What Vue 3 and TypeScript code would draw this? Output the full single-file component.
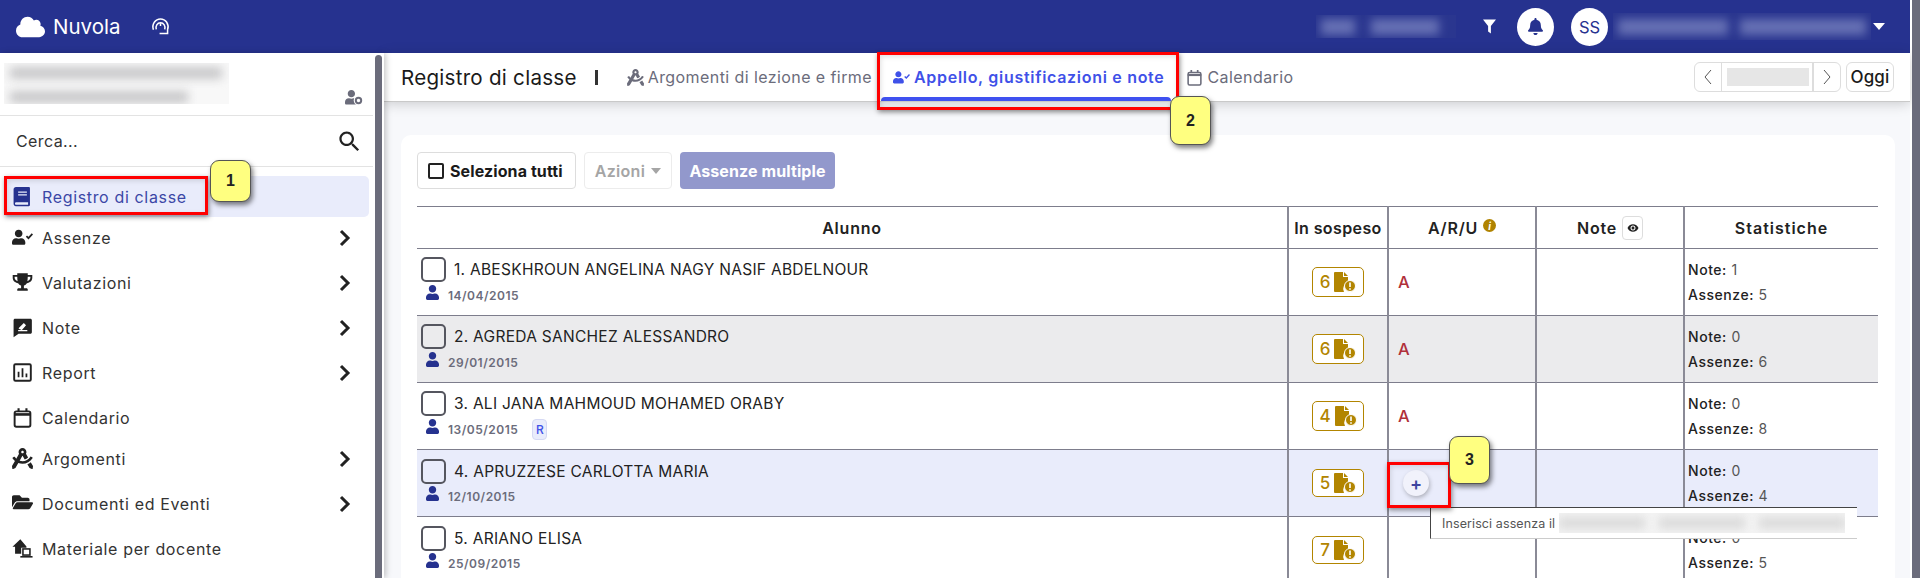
<script setup lang="ts">
type MenuItem = {
  label: string;
  icon: string;
  sub?: boolean;
  active?: boolean;
};

type Student = {
  num: number;
  name: string;
  birth: string;
  pending: number;
  absence: boolean;
  notes: number;
  absences: number;
  tag?: string;
};

const USER = "M224 256c70.7 0 128-57.3 128-128S294.7 0 224 0 96 57.3 96 128s57.3 128 128 128zm89.6 32h-16.7c-22.2 10.2-46.9 16-72.9 16s-50.6-5.8-72.9-16h-16.7C60.2 288 0 348.2 0 422.4V464c0 26.5 21.5 48 48 48h352c26.5 0 48-21.5 48-48v-41.6c0-74.2-60.2-134.4-134.4-134.4z";

// small icon set, viewBox is always 0 0 24 24 so the menu can share one svg tag
const icons: Record<string, string> = {
  book: `<path fill="currentColor" d="M4.5 1h14.7c.7 0 1.3.6 1.3 1.3v19.4c0 .7-.6 1.3-1.3 1.3H4.5C3 23 1.8 21.8 1.8 20.2V3.8C1.8 2.2 3 1 4.5 1zM7 6.2v1.4h10V6.2zm0 3.2v1.4h10V9.4zM4.8 18.6c-.9 0-1.4.7-1.4 1.5s.5 1.4 1.4 1.4h13.6v-2.9z"/>`,
  absence: `<g transform="translate(0 3) scale(.034)" fill="currentColor"><path d="${USER}"/></g><path d="M16.5 10.5l2.3 2.3 4.5-5" fill="none" stroke="currentColor" stroke-width="2"/>`,
  trophy: `<path fill="currentColor" d="M6 1.5h12v1.8h5.2v3.4c0 3.3-2.7 5.8-6.2 6.1-.8 1.3-2 2.2-3.4 2.6v3.1h2.8c1 0 1.6.7 1.6 1.6v1.4H6v-1.4c0-.9.6-1.6 1.6-1.6h2.8v-3.1c-1.4-.4-2.6-1.3-3.4-2.6C3.5 12.5.8 10 .8 6.7V3.3H6zM3 5.3v1.4c0 1.8 1.4 3.3 3.4 3.8-.2-1.4-.4-3.3-.4-5.2zm18 0h-3c0 1.9-.2 3.8-.4 5.2 2-.5 3.4-2 3.4-3.8z"/>`,
  note: `<path fill="currentColor" d="M3.5 2H21c1 0 1.7.7 1.7 1.7v13.6c0 1-.7 1.7-1.7 1.7H7.5l-5.7 4V3.7c0-1 .7-1.7 1.7-1.7z"/><path d="M7 15.5h10.5M8 13.5L13.5 8 15 9.5l-4.5 5" fill="#fff" stroke="#fff" stroke-width="1.5"/>`,
  report: `<rect x="2.5" y="2.5" width="19" height="19" rx="1.5" fill="none" stroke="currentColor" stroke-width="2.2"/><path d="M7.5 11v6.5M12 7v10.5M16.5 13v4.5" stroke="currentColor" stroke-width="2"/>`,
  calendar: `<rect x="3" y="5" width="18" height="17.5" rx="2" fill="none" stroke="currentColor" stroke-width="2.2"/><path d="M2.5 8.5h19" stroke="currentColor" stroke-width="3"/><path d="M7.5 1.5v4M16.5 1.5v4" stroke="currentColor" stroke-width="2.4"/>`,
  compass: `<g transform="scale(.0469)" fill="currentColor"><path d="M457.01 344.42c-25.05 20.33-52.63 37.18-82.54 49.05l54.38 94.19 53.95 23.04c9.81 4.19 20.89-2.21 22.17-12.8l7.02-58.25-54.98-95.23zm42.49-94.56c4.86-7.67 1.89-17.99-6.05-22.39l-28.07-15.57c-7.48-4.15-16.61-1.46-21.26 5.72C403.01 281.15 332.25 320 256 320c-23.93 0-47.23-4.25-69.41-11.53l67.36-116.68c.7.02 1.34.21 2.04.21s1.35-.19 2.04-.21l51.09 88.5c31.23-8.96 59.56-25.75 82.61-48.92l-51.79-89.71C347.39 128.03 352 112.63 352 96c0-53.02-42.98-96-96-96s-96 42.98-96 96c0 16.63 4.61 32.03 12.05 45.66l-68.3 118.31c-12.55-11.61-23.96-24.59-33.68-39-4.79-7.1-13.97-9.62-21.38-5.33l-27.75 16.07c-7.85 4.54-10.63 14.9-5.64 22.47 15.57 23.64 34.69 44.21 55.98 62.02L0 439.66l7.02 58.25c1.28 10.59 12.36 16.99 22.17 12.8l53.95-23.04 70.8-122.63C186.13 377.28 220.62 384 256 384c99.05 0 190.88-51.01 243.5-134.14zM256 64c17.67 0 32 14.33 32 32s-14.33 32-32 32-32-14.33-32-32 14.33-32 32-32z"/></g>`,
  folder: `<g transform="scale(.0417)" fill="currentColor"><path d="M572.694 292.093L500.27 416.248A63.997 63.997 0 0 1 444.989 448H45.025c-18.523 0-30.064-20.093-20.731-36.093l72.424-124.155A64 64 0 0 1 152 256h399.964c18.523 0 30.064 20.093 20.73 36.093zM152 224h328v-48c0-26.51-21.49-48-48-48H272l-64-64H48C21.49 64 0 85.49 0 112v278.046l69.077-118.418C86.214 242.25 117.989 224 152 224z"/></g>`,
  house: `<path fill="currentColor" d="M9.5 1.5L.5 10h3v8h7v-7h6V9.8L9.5 1.5z"/><rect x="12.5" y="12.5" width="8" height="7" fill="#fff" stroke="currentColor" stroke-width="1.8"/><path d="M9.5 21.5h14" stroke="currentColor" stroke-width="1.8"/>`,
};

const menu: MenuItem[] = [
  { label: "Registro di classe", icon: "book", active: true },
  { label: "Assenze", icon: "absence", sub: true },
  { label: "Valutazioni", icon: "trophy", sub: true },
  { label: "Note", icon: "note", sub: true },
  { label: "Report", icon: "report", sub: true },
  { label: "Calendario", icon: "calendar" },
  { label: "Argomenti", icon: "compass", sub: true },
  { label: "Documenti ed Eventi", icon: "folder", sub: true },
  { label: "Materiale per docente", icon: "house" },
];

const students: Student[] = [
  { num: 1, name: "ABESKHROUN ANGELINA NAGY NASIF ABDELNOUR", birth: "14/04/2015", pending: 6, absence: true, notes: 1, absences: 5 },
  { num: 2, name: "AGREDA SANCHEZ ALESSANDRO", birth: "29/01/2015", pending: 6, absence: true, notes: 0, absences: 6 },
  { num: 3, name: "ALI JANA MAHMOUD MOHAMED ORABY", birth: "13/05/2015", pending: 4, absence: true, notes: 0, absences: 8, tag: "R" },
  { num: 4, name: "APRUZZESE CARLOTTA MARIA", birth: "12/10/2015", pending: 5, absence: false, notes: 0, absences: 4 },
  { num: 5, name: "ARIANO ELISA", birth: "25/09/2015", pending: 7, absence: false, notes: 0, absences: 5 },
];
</script>

<template>
  <div class="page">
    <div class="shell">
      <header class="topbar">
        <svg class="cloud" viewBox="0 0 640 512"><path fill="#fff" d="M537.6 226.6c4.1-10.7 6.4-22.4 6.4-34.6 0-53-43-96-96-96-19.7 0-38.1 6-53.3 16.2C367 64.2 315.3 32 256 32c-88.4 0-160 71.6-160 160 0 2.7.1 5.4.2 8.1C40.2 219.8 0 273.2 0 336c0 79.5 64.5 144 144 144h368c70.7 0 128-57.3 128-128 0-61.9-44-113.6-102.4-125.4z" /></svg>
        <span class="brand">Nuvola</span>
        <svg class="gauge" viewBox="0 0 20 18" fill="none" stroke="#fff" stroke-width="1.6">
          <path d="M2.5 12.5C.5 6.5 4.5 1 10 1s9.500 5.500 7.500 11.500V16.500H9" />
          <path d="M5.5 12C4.500 8.500 6.500 5 10 5s5.500 3.500 4.500 7" />
          <path d="M10 5.5v3" />
        </svg>
        <div class="top-right">
          <div class="blurred school"><i class="w1"></i><i class="w2"></i></div>
          <svg class="funnel" viewBox="0 0 14 15"><path fill="#fff" d="M0 0h14L8.500 7v8l-3-2V7z" /></svg>
          <span class="round bell">
            <svg viewBox="0 0 448 512"><path fill="#26328f" d="M224 512c35.32 0 63.97-28.65 63.97-64H160.03c0 35.35 28.65 64 63.97 64zm215.39-149.71c-19.32-20.76-55.47-51.99-55.47-154.29 0-77.7-54.48-139.9-127.94-155.16V32c0-17.67-14.32-32-31.98-32s-31.98 14.33-31.98 32v20.84C118.56 68.1 64.08 130.3 64.08 208c0 102.3-36.15 133.53-55.47 154.29-6 6.45-8.66 14.16-8.61 21.71.11 16.4 12.98 32 32.1 32h383.8c19.12 0 32-15.6 32.1-32 .05-7.55-2.61-15.27-8.61-21.71z" /></svg>
          </span>
          <span class="round initials">SS</span>
          <div class="blurred person"><i class="w3"></i><i class="w4"></i></div>
          <span class="caret"></span>
        </div>
      </header>

      <div class="body">
        <aside class="sidebar">
          <div class="side-scroll">
            <div class="who">
              <div class="blurred who-name"><i class="l1"></i><i class="l2"></i></div>
              <svg class="who-gear" viewBox="0 0 18 15">
                <g transform="scale(.0285)" fill="#6b6c7b"><path :d="USER" /></g>
                <circle cx="13.5" cy="10.5" r="4.8" fill="#fff" />
                <circle cx="13.5" cy="10.5" r="2.7" fill="none" stroke="#6b6c7b" stroke-width="2" />
              </svg>
            </div>
            <div class="search">
              <span>Cerca...</span>
              <svg viewBox="0 0 24 24"><path fill="#222" d="M15.5 14h-.79l-.28-.27C15.41 12.59 16 11.11 16 9.5 16 5.91 13.09 3 9.5 3S3 5.91 3 9.5 5.91 16 9.5 16c1.61 0 3.09-.59 4.23-1.57l.27.28v.79l5 4.99L20.49 19l-4.99-5zm-6 0C7.01 14 5 11.99 5 9.5S7.01 5 9.5 5 14 7.01 14 9.5 11.99 14 9.5 14z" /></svg>
            </div>
            <nav class="menu">
              <a v-for="m in menu" :key="m.label" class="menu-item" :class="{ active: m.active, sub: m.sub }">
                <svg class="menu-icon" viewBox="0 0 24 24" v-html="icons[m.icon]"></svg>
                <span>{{ m.label }}</span>
                <svg v-if="m.sub" class="chev" viewBox="0 0 12 18"><path d="M2 2l7 7-7 7" fill="none" stroke="#222" stroke-width="3" /></svg>
              </a>
            </nav>
          </div>
          <div class="side-thumb"></div>
        </aside>

        <main class="main">
          <div class="subhead">
            <h1>Registro di classe</h1>
            <span class="sep"></span>
            <a class="tab">
              <svg viewBox="0 0 24 24" v-html="icons.compass"></svg>
              Argomenti di lezione e firme
            </a>
            <a class="tab current">
              <svg viewBox="0 0 24 24" v-html="icons.absence"></svg>
              Appello, giustificazioni e note
            </a>
            <a class="tab">
              <svg viewBox="0 0 24 24" v-html="icons.calendar"></svg>
              Calendario
            </a>
            <div class="date-nav">
              <div class="date-box">
                <span class="arrow"><svg viewBox="0 0 10 16"><path d="M8 1L2 8l6 7" fill="none" stroke="#555" /></svg></span>
                <span class="date-value"><i></i></span>
                <span class="arrow"><svg viewBox="0 0 10 16"><path d="M2 1l6 7-6 7" fill="none" stroke="#555" /></svg></span>
              </div>
              <button class="today">Oggi</button>
            </div>
          </div>

          <section class="card">
            <div class="actions">
              <button class="btn select"><span class="box small"></span>Seleziona tutti</button>
              <button class="btn disabled">Azioni <span class="tri"></span></button>
              <button class="btn multi">Assenze multiple</button>
            </div>
            <table class="grid">
              <colgroup>
                <col class="c-name" />
                <col class="c-pending" />
                <col class="c-aru" />
                <col class="c-note" />
                <col class="c-stat" />
              </colgroup>
              <thead>
                <tr>
                  <th>Alunno</th>
                  <th>In sospeso</th>
                  <th>
                    <span class="with-icon">A/R/U <span class="info">i</span></span>
                  </th>
                  <th>
                    <span class="with-icon">Note
                      <span class="eye"><svg viewBox="0 0 24 24"><path fill="#222" d="M12 4.5C7 4.5 2.73 7.61 1 12c1.73 4.39 6 7.5 11 7.5s9.27-3.11 11-7.5c-1.73-4.39-6-7.5-11-7.5zM12 17c-2.76 0-5-2.24-5-5s2.24-5 5-5 5 2.24 5 5-2.24 5-5 5zm0-8c-1.66 0-3 1.34-3 3s1.34 3 3 3 3-1.34 3-3-1.34-3-3-3z" /></svg></span>
                    </span>
                  </th>
                  <th>Statistiche</th>
                </tr>
              </thead>
              <tbody>
                <tr v-for="s in students" :key="s.num" :class="{ odd: s.num === 2, hover: s.num === 4, late: s.num > 3 }">
                  <td class="who-cell">
                    <div class="name-line"><span class="box"></span>{{ s.num }}. {{ s.name }}</div>
                    <div class="birth-line">
                      <svg viewBox="0 0 448 512"><path fill="#26328f" :d="USER" /></svg>
                      <span class="birth">{{ s.birth }}</span>
                      <span v-if="s.tag" class="tag">{{ s.tag }}</span>
                    </div>
                  </td>
                  <td class="center">
                    <span class="pending" :class="{ slim: s.num > 3 }">
                      {{ s.pending }}
                      <svg viewBox="0 0 22 20">
                        <path fill="#b28500" d="M1 0h8v5h5v6a6 6 0 0 0-4 9H1a1 1 0 0 1-1-1V1a1 1 0 0 1 1-1zM10 0l4 4h-4z" />
                        <circle cx="16" cy="14" r="5.5" fill="#b28500" stroke="#fff" />
                        <path d="M16 10.5V15M16 16.2v1.5" stroke="#fff" stroke-width="1.6" />
                      </svg>
                    </span>
                  </td>
                  <td class="aru">
                    <span v-if="s.absence" class="mark">A</span>
                    <span v-else-if="s.num === 4" class="plus">+</span>
                  </td>
                  <td></td>
                  <td class="stats">
                    <div><b>Note:</b> {{ s.notes }}</div>
                    <div><b>Assenze:</b> {{ s.absences }}</div>
                  </td>
                </tr>
              </tbody>
            </table>
          </section>
        </main>
      </div>
    </div>
    <div class="page-scroll"></div>

    <!-- annotations drawn on top of the screenshot -->
    <div class="red r1"></div>
    <div class="red r2"></div>
    <div class="red r3"></div>
    <div class="callout n1">1</div>
    <div class="callout n2">2</div>
    <div class="callout n3">3</div>
    <div class="tooltip">Inserisci assenza il <span class="tip-blur"><i></i><i></i><i></i></span></div>
  </div>
</template>

<style>
html,
body {
  margin: 0;
  overflow: hidden;
}
</style>

<style scoped>
.page {
  position: relative;
  display: flex;
  width: 1920px;
  height: 578px;
  overflow: hidden;
  background: #fff;
  font-family: Inter, "Noto Sans", sans-serif;
  color: #222;
}
.shell {
  display: flex;
  flex-direction: column;
  width: 1910px;
}
.page-scroll {
  width: 8px;
  margin-left: 2px;
  background: #6b6c7b;
}

.topbar {
  display: flex;
  align-items: center;
  flex: 0 0 53px;
  padding-left: 16px;
  background: #26328f;
  color: #fff;
}
.cloud {
  width: 29px;
  height: 24px;
}
.brand {
  margin-left: 8px;
  font-size: 20.5px;
}
.gauge {
  width: 19px;
  height: 17px;
  margin-left: 31px;
}
.top-right {
  display: flex;
  align-items: center;
  margin-left: auto;
  padding-right: 25px;
}
.blurred {
  display: flex;
  overflow: hidden;
}
.blurred i {
  display: block;
  filter: blur(5px);
}
.school {
  width: 140px;
  height: 23px;
  gap: 16px;
  align-items: center;
  background: #2a368f;
}
.school i {
  height: 16px;
  background: #6670b4;
}
.school .w1 {
  width: 34px;
  margin-left: 5px;
}
.school .w2 {
  width: 68px;
}
.funnel {
  width: 13px;
  height: 15px;
  margin-left: 27px;
}
.round {
  display: flex;
  align-items: center;
  justify-content: center;
  width: 37px;
  height: 38px;
  border-radius: 50%;
  background: #fff;
  color: #26328f;
}
.bell {
  margin-left: 21px;
}
.bell svg {
  width: 15px;
  height: 17px;
}
.initials {
  margin-left: 17px;
  font-size: 16.5px;
}
.person {
  width: 258px;
  height: 27px;
  margin-left: 5px;
  gap: 12px;
  align-items: center;
  background: #2a368f;
}
.person i {
  height: 16px;
  background: #6670b4;
}
.person .w3 {
  width: 110px;
  margin-left: 5px;
}
.person .w4 {
  width: 126px;
}
.caret {
  width: 0;
  height: 0;
  margin-left: 2px;
  border-left: 6px solid transparent;
  border-right: 6px solid transparent;
  border-top: 7px solid #fff;
}

.body {
  display: flex;
  flex: 1;
  min-height: 0;
}
.sidebar {
  position: relative;
  z-index: 2;
  display: flex;
  flex: 0 0 384px;
  background: #fff;
  box-shadow: 2px 0 6px rgba(0, 0, 0, 0.22);
}
.side-scroll {
  width: 373px;
}
.side-thumb {
  width: 7px;
  margin: 2px 0 0 2px;
  border-radius: 4px 4px 0 0;
  background: #6b6c7b;
}
.who {
  position: relative;
  height: 63px;
  border-bottom: 1px solid #e3e3e3;
  box-sizing: border-box;
  padding: 10px 0 0 4px;
}
.who-name {
  flex-direction: column;
  gap: 12px;
  width: 225px;
  height: 41px;
  padding: 4px 0 0 6px;
  box-sizing: border-box;
  background: #f8f8f8;
}
.who-name i {
  flex: none;
  height: 12px;
  background: #c8c8ca;
}
.who-name .l1 {
  width: 212px;
}
.who-name .l2 {
  width: 178px;
}
.who-gear {
  position: absolute;
  right: 10px;
  top: 37px;
  width: 18px;
  height: 15px;
}
.search {
  display: flex;
  align-items: center;
  justify-content: space-between;
  height: 50px;
  padding: 0 10px 0 16px;
  border-bottom: 1px solid #e3e3e3;
  font-size: 16px;
  letter-spacing: 0.4px;
  color: #333;
}
.search svg {
  width: 27px;
  height: 27px;
}
.menu {
  padding: 9px 4px 0;
}
.menu-item {
  display: flex;
  align-items: center;
  box-sizing: border-box;
  height: 41px;
  padding: 0 18px 0 8px;
  border-radius: 5px;
  font-size: 16px;
  letter-spacing: 0.65px;
  color: #333;
}
.menu-item.sub {
  height: 45px;
  padding-bottom: 4px;
}
.menu-item.active {
  background: #e9ecfb;
  color: #3b47a6;
}
.menu-icon {
  width: 21px;
  height: 21px;
  margin-right: 9px;
  color: #222;
}
.active .menu-icon {
  color: #26328f;
}
.chev {
  width: 12px;
  height: 18px;
  margin-left: auto;
}

.main {
  display: flex;
  flex-direction: column;
  flex: 1;
  min-width: 0;
  background: #f7f8fb;
}
.subhead {
  display: flex;
  align-items: center;
  flex: 0 0 49px;
  box-sizing: border-box;
  height: 49px;
  padding: 0 16px 0 17px;
  background: #fff;
  border-bottom: 1px solid #c9c9c9;
  box-shadow: 0 2px 12px rgba(0, 0, 0, 0.18);
}
.subhead h1 {
  margin: 0;
  font-size: 20.6px;
  font-weight: 400;
  letter-spacing: 0.25px;
  color: #1a1a1a;
}
.sep {
  width: 3px;
  height: 15px;
  margin: 1px 0 0 18px;
  background: #333;
}
.tab {
  position: relative;
  display: flex;
  align-items: center;
  height: 48px;
  font-size: 16px;
  letter-spacing: 0.42px;
  color: #6b6c7b;
  white-space: nowrap;
}
.tab svg {
  width: 17px;
  height: 17px;
  margin-right: 4px;
}
.sep + .tab {
  margin-left: 29px;
}
.tab.current {
  margin-left: 21px;
  font-weight: 600;
  letter-spacing: 0.7px;
  color: #3f51e8;
}
.tab.current::after {
  content: "";
  position: absolute;
  left: -12px;
  right: -7px;
  bottom: 0;
  height: 4px;
  border-radius: 4px 4px 0 0;
  background: #3f51f0;
}
.tab.current + .tab {
  margin-left: 22px;
}
.date-nav {
  display: flex;
  gap: 5px;
  margin-left: auto;
}
.date-box {
  display: flex;
  width: 147px;
  height: 30px;
  box-sizing: border-box;
  border: 1px solid #ddd;
  border-radius: 6px;
}
.arrow {
  display: flex;
  align-items: center;
  justify-content: center;
  width: 26px;
}
.arrow svg {
  width: 10px;
  height: 16px;
}
.date-value {
  display: flex;
  align-items: center;
  flex: 1;
  padding-left: 5px;
  border-left: 1px solid #ddd;
  border-right: 2px solid #ddd;
  overflow: hidden;
}
.date-value i {
  display: block;
  width: 82px;
  height: 18px;
  background: #e6e6e6;
}
.today {
  width: 48px;
  height: 30px;
  padding: 0;
  border: 1px solid #ddd;
  border-radius: 6px;
  background: #fff;
  font: 500 17px Inter, sans-serif;
  letter-spacing: 0.2px;
  color: #1a1a1a;
}

.card {
  flex: 1;
  margin: 33px 15px 0 17px;
  padding: 17px 16px 0;
  border-radius: 10px 10px 0 0;
  background: #fff;
}
.actions {
  display: flex;
  gap: 8px;
}
.btn {
  display: flex;
  align-items: center;
  height: 37px;
  padding: 0;
  box-sizing: border-box;
  border: 1px solid #ddd;
  border-radius: 4px;
  background: #fff;
  font: 700 16px Inter, sans-serif;
  letter-spacing: 0.1px;
  color: #1a1a1a;
}
.select {
  width: 159px;
  padding-left: 10px;
}
.disabled {
  justify-content: center;
  gap: 6px;
  width: 88px;
  border-color: #ececec;
  font-weight: 600;
  letter-spacing: 0.3px;
  color: #a5a5a5;
}
.tri {
  width: 0;
  height: 0;
  border-left: 5px solid transparent;
  border-right: 5px solid transparent;
  border-top: 6px solid #a5a5a5;
}
.multi {
  justify-content: center;
  width: 155px;
  border: 0;
  background: #9298cc;
  color: #fff;
}
.box {
  flex: none;
  display: inline-block;
  box-sizing: border-box;
  width: 25px;
  height: 25px;
  margin-right: 8px;
  border: 2px solid #55565f;
  border-radius: 5px;
}
.box.small {
  width: 16px;
  height: 16px;
  border-radius: 2px;
  border-color: #222;
  margin-right: 6px;
}

.grid {
  width: 1461px;
  margin-top: 17px;
  table-layout: fixed;
  border-collapse: collapse;
}
.c-name {
  width: 871px;
}
.c-pending {
  width: 100px;
}
.c-aru,
.c-note {
  width: 148px;
}
.c-stat {
  width: 194px;
}
.grid th {
  height: 41px;
  padding: 0;
  border-top: 1px solid #7d7d8c;
  border-bottom: 1px solid #7d7d8c;
  font-size: 16px;
  font-weight: 600;
  letter-spacing: 0.8px;
  color: #222;
}
.grid th:nth-child(2) {
  letter-spacing: 0.4px;
}
.grid th:last-child {
  letter-spacing: 1px;
}
.grid th + th,
.grid td + td {
  border-left: 2px solid #8a8a96;
}
.grid td {
  height: 66px;
  padding: 0;
  border-bottom: 1px solid #7d7d8c;
}
.odd td {
  background: #ebebed;
}
.hover td {
  background: #e9ecfb;
}
.with-icon {
  display: inline-flex;
  align-items: center;
  gap: 5px;
}
.info {
  display: inline-flex;
  align-items: center;
  justify-content: center;
  width: 13px;
  height: 13px;
  margin-top: -4px;
  border-radius: 50%;
  background: #b08300;
  font-size: 10px;
  font-style: italic;
  font-weight: 700;
  letter-spacing: 0;
  color: #fff;
}
.eye {
  display: inline-flex;
  align-items: center;
  justify-content: center;
  width: 21px;
  height: 24px;
  box-sizing: border-box;
  border: 1px solid #ddd;
  border-radius: 4px;
}
.eye svg {
  width: 12px;
  height: 12px;
}
.who-cell {
  vertical-align: top;
}
.name-line {
  display: flex;
  align-items: center;
  margin: 8px 0 0 4px;
  font-size: 15.5px;
  letter-spacing: 0.28px;
  color: #222;
}
.late .name-line {
  margin-top: 9px;
}
.birth-line {
  display: flex;
  align-items: center;
  height: 22px;
  margin: 2px 0 0 9px;
}
.late .birth-line {
  margin-top: 1px;
}
.birth-line svg {
  width: 13px;
  height: 15px;
  margin: -6px 9px 0 0;
}
.birth {
  font-size: 12px;
  font-weight: 600;
  letter-spacing: 0.5px;
  color: #6b6c7b;
}
.tag {
  display: inline-flex;
  align-items: center;
  justify-content: center;
  width: 15px;
  height: 21px;
  margin-left: 14px;
  box-sizing: border-box;
  border: 1px solid #d5d9f3;
  border-radius: 4px;
  background: #e9ecfb;
  font-size: 12px;
  font-weight: 500;
  color: #3f51e8;
}
.center {
  text-align: center;
}
.pending {
  display: inline-flex;
  align-items: center;
  justify-content: center;
  gap: 4px;
  box-sizing: border-box;
  width: 52px;
  height: 30px;
  vertical-align: middle;
  border: 1.5px solid #b28500;
  border-radius: 5px;
  background: #fff;
  font-size: 17px;
  font-weight: 500;
  color: #b28500;
}
.pending.slim {
  height: 28px;
}
.pending svg {
  width: 22px;
  height: 20px;
}
.aru {
  padding-left: 9px !important;
}
.mark {
  font-size: 16.5px;
  font-weight: 500;
  color: #b0303a;
}
.plus {
  display: flex;
  align-items: center;
  justify-content: center;
  width: 26px;
  height: 26px;
  margin-left: 5px;
  border-radius: 50%;
  background: #f1f2fb;
  box-shadow: 1px 2px 4px rgba(0, 0, 0, 0.25);
  font-size: 18px;
  font-weight: 600;
  color: #3d44a0;
}
.stats {
  padding-left: 3px !important;
  font-size: 14px;
  letter-spacing: 0.55px;
  line-height: 25px;
  color: #555;
}
.stats b {
  font-weight: 500;
  color: #222;
}

.red {
  position: absolute;
  z-index: 5;
  box-sizing: border-box;
  border: 3px solid #f00;
  box-shadow: 1px 2px 5px rgba(0, 0, 0, 0.45), inset 1px 2px 5px rgba(0, 0, 0, 0.12);
}
.r1 {
  left: 4px;
  top: 176px;
  width: 204px;
  height: 39px;
}
.r2 {
  left: 877px;
  top: 52px;
  width: 302px;
  height: 58px;
}
.r3 {
  left: 1387px;
  top: 462px;
  width: 64px;
  height: 46px;
}
.callout {
  position: absolute;
  z-index: 6;
  display: flex;
  align-items: center;
  justify-content: center;
  box-sizing: border-box;
  width: 41px;
  border: 1px solid #555;
  border-radius: 9px;
  background: #ffff80;
  box-shadow: 2px 3px 5px rgba(0, 0, 0, 0.5);
  font-family: "Liberation Sans", sans-serif;
  font-size: 16px;
  font-weight: 700;
  color: #222;
}
.n1 {
  left: 210px;
  top: 160px;
  height: 42px;
}
.n2 {
  left: 1170px;
  top: 96px;
  height: 49px;
}
.n3 {
  left: 1449px;
  top: 436px;
  height: 48px;
}
.tooltip {
  position: absolute;
  z-index: 4;
  left: 1430px;
  top: 507px;
  display: flex;
  align-items: center;
  box-sizing: border-box;
  width: 427px;
  height: 32px;
  padding-left: 11px;
  background: #fff;
  border-top: 1px solid #444;
  border-left: 1px solid #444;
  border-bottom: 1px solid #ccc;
  font-size: 12.5px;
  letter-spacing: 0.1px;
  color: #555;
}
.tip-blur {
  display: flex;
  gap: 14px;
  align-items: center;
  width: 286px;
  height: 20px;
  margin-left: 4px;
  overflow: hidden;
  background: #f3f3f3;
}
.tip-blur i {
  display: block;
  flex: 1;
  height: 12px;
  background: #dcdcdc;
  filter: blur(4px);
}
</style>
